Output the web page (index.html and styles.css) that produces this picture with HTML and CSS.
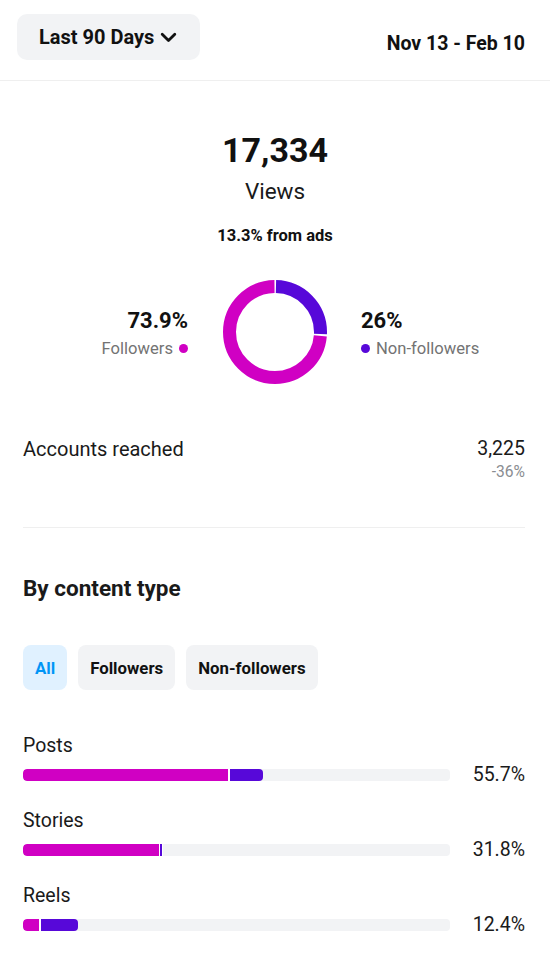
FILE: index.html
```html
<!DOCTYPE html>
<html>
<head>
<meta charset="utf-8">
<link rel="stylesheet" href="styles.css">
</head>
<body>
<header class="topbar">
  <button class="range-btn">Last 90 Days
    <svg class="chev" width="17" height="11" viewBox="0 0 17 11"><path d="M2.2 2.2 L8.5 8.5 L14.8 2.2" fill="none" stroke="#111" stroke-width="2.8" stroke-linecap="round" stroke-linejoin="round"/></svg>
  </button>
  <div class="dates">Nov 13 - Feb 10</div>
</header>

<section class="summary">
  <div class="big">17,334</div>
  <div class="views">Views</div>
  <div class="ads">13.3% from ads</div>
  <div class="split">
    <div class="side left">
      <div class="pct">73.9%</div>
      <div class="lbl">Followers <span class="dot mag"></span></div>
    </div>
    <svg class="donut" width="104" height="104" viewBox="0 0 104 104">
      <g transform="rotate(-90 52 52)">
        <circle cx="52" cy="52" r="45.5" fill="none" stroke="#d000c3" stroke-width="13" stroke-dasharray="209.6 400" stroke-dashoffset="-75.3"/>
        <circle cx="52" cy="52" r="45.5" fill="none" stroke="#5708d9" stroke-width="13" stroke-dasharray="72.3 400" stroke-dashoffset="-1"/>
      </g>
    </svg>
    <div class="side right">
      <div class="pct">26%</div>
      <div class="lbl"><span class="dot pur"></span> Non-followers</div>
    </div>
  </div>
</section>

<section class="reach">
  <div class="reach-label">Accounts reached</div>
  <div class="reach-vals">
    <div class="reach-num">3,225</div>
    <div class="reach-chg">-36%</div>
  </div>
</section>

<div class="sep"></div>

<section class="content">
  <h2 class="title">By content type</h2>
  <div class="chips">
    <span class="chip active">All</span>
    <span class="chip">Followers</span>
    <span class="chip">Non-followers</span>
  </div>
  <div class="rows">
    <div class="row">
      <div class="row-label">Posts</div>
      <div class="row-bar">
        <div class="track"><span class="seg mag" style="width:205px"></span><span class="seg pur" style="width:35px"></span></div>
        <div class="row-pct">55.7%</div>
      </div>
    </div>
    <div class="row">
      <div class="row-label">Stories</div>
      <div class="row-bar">
        <div class="track"><span class="seg mag" style="width:136px"></span><span class="seg pur thin" style="width:4px"></span></div>
        <div class="row-pct">31.8%</div>
      </div>
    </div>
    <div class="row">
      <div class="row-label">Reels</div>
      <div class="row-bar">
        <div class="track"><span class="seg mag" style="width:16px"></span><span class="seg pur" style="width:39px"></span></div>
        <div class="row-pct">12.4%</div>
      </div>
    </div>
  </div>
</section>
</body>
</html>
```

FILE: styles.css
```css
* { box-sizing: border-box; }
html, body { margin: 0; padding: 0; background: #fff; }
body {
  font-family: Roboto, "Liberation Sans", sans-serif;
  color: #111;
  width: 550px;
}

.topbar {
  display: flex;
  align-items: center;
  justify-content: space-between;
  height: 81px;
  padding: 0 25px 0 17px;
  border-bottom: 1px solid #efefef;
}
.range-btn {
  display: flex;
  align-items: center;
  gap: 6px;
  height: 46px;
  width: 183px;
  margin-top: -7px;
  padding: 0 22px;
  border: none;
  border-radius: 10px;
  background: #f2f3f5;
  font-family: inherit;
  font-size: 20px;
  font-weight: 700;
  color: #111;
}
.chev { margin-top: 1px; }
.dates {
  font-size: 19.5px;
  font-weight: 700;
  margin-top: 7px;
}

.summary {
  display: flex;
  flex-direction: column;
  align-items: center;
  padding-top: 48px;
}
.big {
  font-size: 34px;
  font-weight: 700;
  line-height: 42px;
}
.views {
  font-size: 22.5px;
  line-height: 26px;
  margin-top: 7px;
  color: #1a1a1a;
}
.ads {
  font-size: 16.5px;
  font-weight: 700;
  line-height: 20px;
  margin-top: 22px;
}
.split {
  display: grid;
  grid-template-columns: 1fr auto 1fr;
  align-items: center;
  column-gap: 34px;
  width: 100%;
  margin-top: 34px;
}
.side { display: flex; flex-direction: column; gap: 5px; margin-top: 4px; }
.side.left { align-items: flex-end; padding-right: 1px; }
.side.right { align-items: flex-start; }
.pct { font-size: 22px; font-weight: 700; line-height: 24px; }
.lbl {
  display: flex;
  align-items: center;
  gap: 6px;
  font-size: 16.6px;
  line-height: 22px;
  color: #737373;
}
.dot { width: 9px; height: 9px; border-radius: 50%; display: inline-block; }
.dot.mag { background: #d000c3; }
.dot.pur { background: #5708d9; }
.donut { display: block; }

.reach {
  display: flex;
  justify-content: space-between;
  align-items: flex-start;
  padding: 53px 25px 0 23px;
}
.reach-label { font-size: 20px; line-height: 24px; color: #1a1a1a; }
.reach-vals { display: flex; flex-direction: column; align-items: flex-end; }
.reach-num { font-size: 19.5px; line-height: 24px; color: #1a1a1a; }
.reach-chg { font-size: 15.6px; line-height: 20px; color: #8a8d91; margin-top: 1px; }

.sep {
  height: 1px;
  background: #efefef;
  margin: 45px 25px 0 23px;
}

.content { padding: 0 25px 0 23px; }
.title {
  margin: 46px 0 0;
  font-size: 22.5px;
  line-height: 28px;
  font-weight: 700;
  color: #1a1a1a;
}
.chips {
  display: flex;
  gap: 11px;
  margin-top: 43px;
}
.chip {
  height: 45px;
  display: flex;
  align-items: center;
  padding: 0 12px;
  border-radius: 8px;
  background: #f2f3f5;
  font-size: 16.8px;
  font-weight: 700;
  color: #111;
}
.chip.active { background: #e0f1ff; color: #0095f6; }

.rows { margin-top: 44px; display: flex; flex-direction: column; gap: 22px; }
.row-label { font-size: 19.5px; line-height: 24px; color: #1a1a1a; }
.row-bar {
  display: flex;
  align-items: center;
  justify-content: space-between;
  margin-top: 5px;
}
.track {
  display: flex;
  width: 427px;
  height: 12px;
  border-radius: 4px;
  background: #f2f3f5;
  overflow: hidden;
}
.seg { display: block; height: 100%; }
.seg.mag { background: #d000c3; border-radius: 4px 0 0 4px; }
.seg.pur { background: #5708d9; border-left: 2px solid #fff; border-radius: 0 4px 4px 0; }
.seg.pur.thin { border-left: 1px solid #fff; border-right: 1px solid #fff; border-radius: 0; }
.row-pct { font-size: 19.5px; line-height: 24px; color: #1a1a1a; }
```
